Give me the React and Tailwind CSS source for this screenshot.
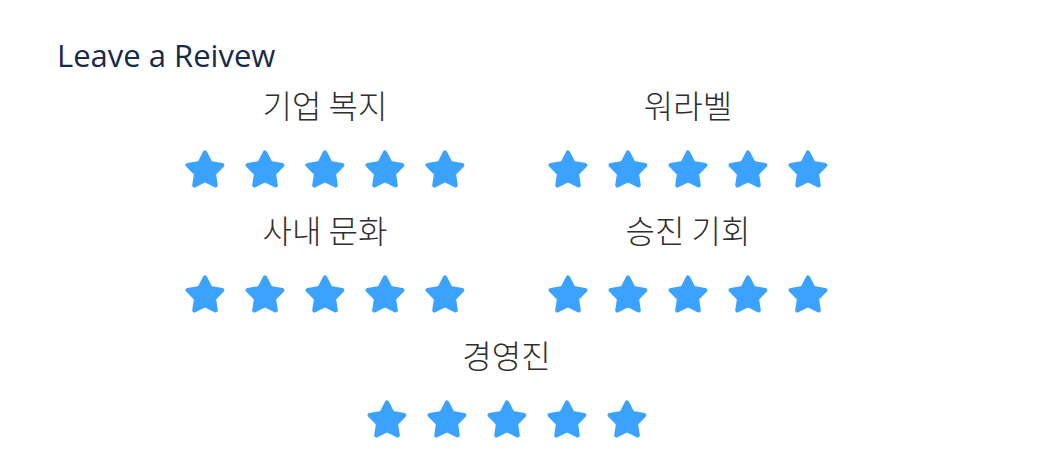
const categories = [
  { label: '기업 복지', rating: 5 },
  { label: '워라벨', rating: 5 },
  { label: '사내 문화', rating: 5 },
  { label: '승진 기회', rating: 5 },
  { label: '경영진', rating: 5 },
];

// rounded five-point star, computed once
const R = 18;
const r = 9.2;
const cy = 20 + (R - R * Math.cos(Math.PI / 5)) / 2;
const starPoints = Array.from({ length: 10 }, (_, i) => {
  const rad = i % 2 === 0 ? R : r;
  const a = -Math.PI / 2 + (i * Math.PI) / 5;
  return `${(20 + rad * Math.cos(a)).toFixed(2)},${(cy + rad * Math.sin(a)).toFixed(2)}`;
}).join(' ');

function Star({ filled }) {
  const color = filled ? '#3ba2ff' : '#d1d5db';
  return (
    <svg viewBox="0 0 40 40" className="w-10 h-10">
      <polygon points={starPoints} fill={color} stroke={color} strokeWidth="4.5" strokeLinejoin="round" />
    </svg>
  );
}

function RatingItem({ label, rating, wide }) {
  return (
    <div className={`flex flex-col items-center ${wide ? 'col-span-2' : ''}`}>
      <p className="text-[32px] leading-10 font-light text-[#2f2f2f] font-['Noto_Sans_CJK_KR','Noto_Sans',sans-serif]">
        {label}
      </p>
      <div className="flex gap-5 mt-[25px] mb-5">
        {[1, 2, 3, 4, 5].map((n) => (
          <Star key={n} filled={n <= rating} />
        ))}
      </div>
    </div>
  );
}

export default function App() {
  return (
    <div className="bg-white min-h-screen px-[57px] pt-[34px]">
      <h2 className="text-[31px] leading-[42px] text-[#172a4a] font-['Open_Sans',sans-serif]">Leave a Reivew</h2>
      <div className="w-[899px] mt-2">
        <div className="grid grid-cols-2 w-[726px] mx-auto">
          {categories.map((c, i) => (
            <RatingItem key={c.label} label={c.label} rating={c.rating} wide={i === categories.length - 1} />
          ))}
        </div>
      </div>
    </div>
  );
}
